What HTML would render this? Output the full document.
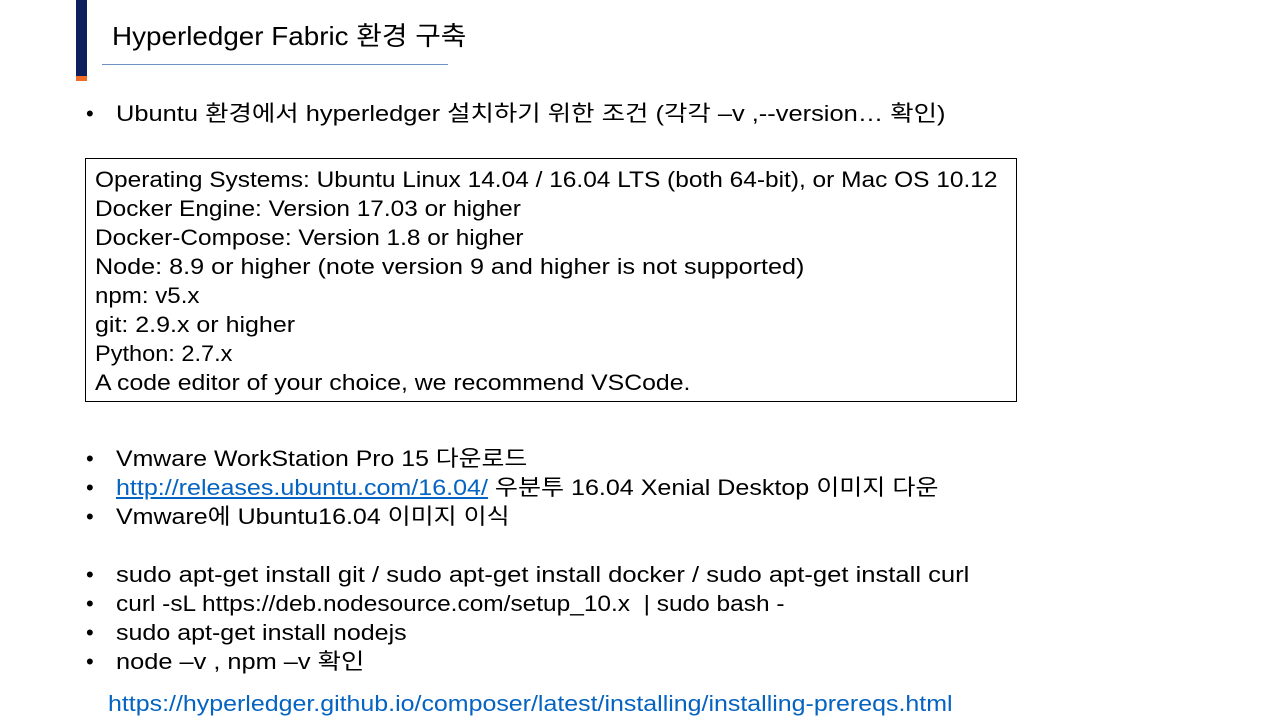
<!DOCTYPE html>
<html><head><meta charset="utf-8"><style>
body{margin:0;width:1280px;height:720px;background:#fff;position:relative;overflow:hidden;font-family:"Liberation Sans","Noto Sans CJK KR",sans-serif;color:#000}
.t{position:absolute;white-space:nowrap;font-size:22px;line-height:29px;transform-origin:0 50%}
a{color:#0563c1;text-decoration:underline}
</style></head><body>
<div style="position:absolute;left:76px;top:0;width:11px;height:76px;background:#0d1f5c"></div>
<div style="position:absolute;left:76px;top:76px;width:11px;height:5px;background:#f06b25"></div>
<div class="t" style="left:112px;top:20px;font-size:26px;line-height:32px;transform:scaleX(1.07)">Hyperledger Fabric 환경 구축</div>
<div style="position:absolute;left:102px;top:64px;width:346px;height:1px;background:#6d8fc4"></div>

<div class="t" style="left:86px;top:99px">•</div>
<div class="t" style="left:116px;top:99px;transform:scaleX(1.156)">Ubuntu 환경에서 hyperledger 설치하기 위한 조건 (각각 –v ,--version… 확인)</div>

<div style="position:absolute;left:85px;top:158px;width:930px;height:242px;border:1px solid #000"></div>
<div class="t" style="left:95px;top:165px;transform:scaleX(1.112)">Operating Systems: Ubuntu Linux 14.04 / 16.04 LTS (both 64-bit), or Mac OS 10.12</div>
<div class="t" style="left:95px;top:194px;transform:scaleX(1.109)">Docker Engine: Version 17.03 or higher</div>
<div class="t" style="left:95px;top:223px;transform:scaleX(1.109)">Docker-Compose: Version 1.8 or higher</div>
<div class="t" style="left:95px;top:252px;transform:scaleX(1.144)">Node: 8.9 or higher (note version 9 and higher is not supported)</div>
<div class="t" style="left:95px;top:281px;transform:scaleX(1.095)">npm: v5.x</div>
<div class="t" style="left:95px;top:310px;transform:scaleX(1.136)">git: 2.9.x or higher</div>
<div class="t" style="left:95px;top:339px;transform:scaleX(1.07)">Python: 2.7.x</div>
<div class="t" style="left:95px;top:368px;transform:scaleX(1.127)">A code editor of your choice, we recommend VSCode.</div>

<div class="t" style="left:86px;top:444px">•<br>•<br>•<br><br>•<br>•<br>•<br>•</div>
<div class="t" style="left:116px;top:444px;transform:scaleX(1.129)">Vmware WorkStation Pro 15 다운로드</div>
<div class="t" style="left:116px;top:473px;transform:scaleX(1.139)"><a>http://releases.ubuntu.com/16.04/</a> 우분투 16.04 Xenial Desktop 이미지 다운</div>
<div class="t" style="left:116px;top:502px;transform:scaleX(1.136)">Vmware에 Ubuntu16.04 이미지 이식</div>
<div class="t" style="left:116px;top:560px;transform:scaleX(1.163)">sudo apt-get install git / sudo apt-get install docker / sudo apt-get install curl</div>
<div class="t" style="left:116px;top:589px;transform:scaleX(1.111)">curl -sL https://deb.nodesource.com/setup_10.x &nbsp;| sudo bash -</div>
<div class="t" style="left:116px;top:618px;transform:scaleX(1.137)">sudo apt-get install nodejs</div>
<div class="t" style="left:116px;top:647px;transform:scaleX(1.153)">node –v , npm –v 확인</div>

<div class="t" style="left:108px;top:689px;color:#0563c1;transform:scaleX(1.134)">https://hyperledger.github.io/composer/latest/installing/installing-prereqs.html</div>
</body></html>
